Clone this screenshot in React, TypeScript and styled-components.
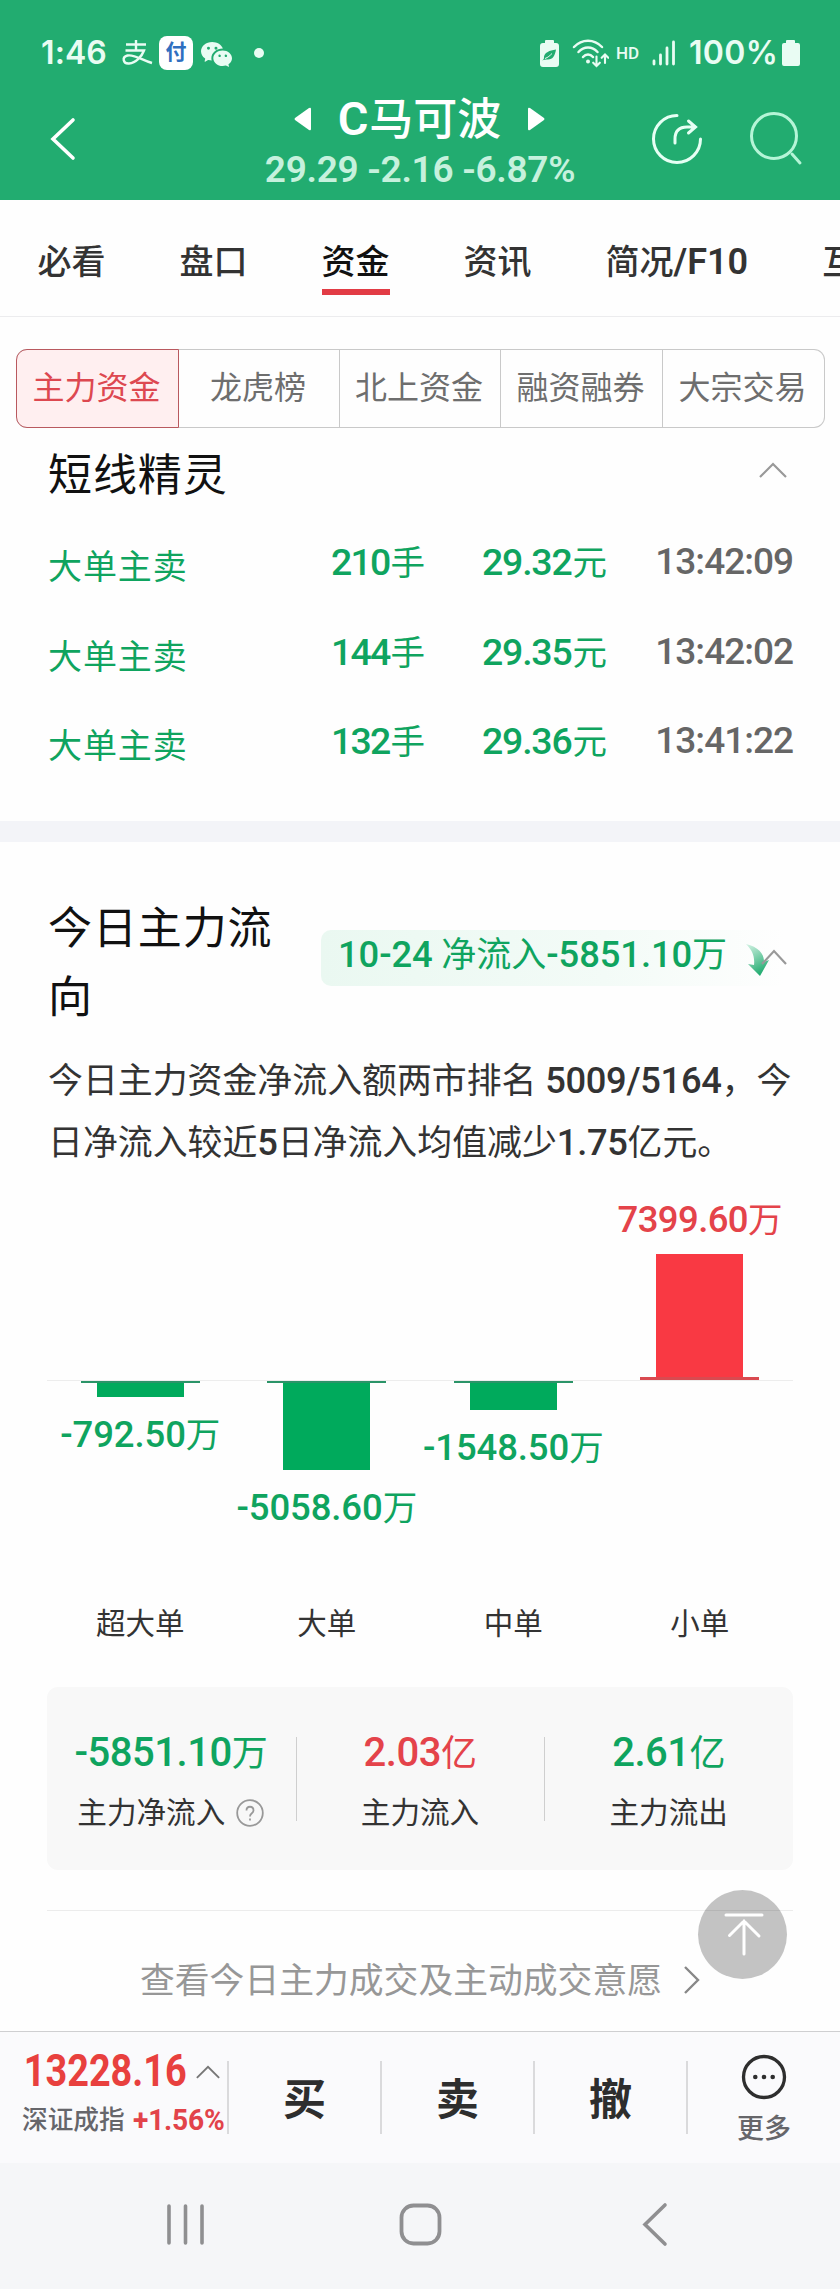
import React from 'react';
import styled, { createGlobalStyle } from 'styled-components';
import { BsWechat } from 'react-icons/bs';

const GREEN = '#0fa45f';
const RED = '#e4434a';

const GlobalStyle = createGlobalStyle`
  *, *::before, *::after { box-sizing: border-box; }
  html, body { margin: 0; padding: 0; background: #fff; }
  body {
    width: 840px;
    overflow-x: hidden;
    font-family: Roboto, "Noto Sans CJK SC", sans-serif;
    color: #333;
  }
`;

const Screen = styled.div`
  position: relative;
  width: 840px;
  height: 2289px;
  overflow: hidden;
  display: flex;
  flex-direction: column;
  background: #fefefe;
`;

/* ---------- header ---------- */
const Header = styled.header`
  height: 200px;
  flex: none;
  background: #22ac70;
  color: #fff;
`;

const StatusBar = styled.div`
  height: 90px;
  padding: 16px 40px 0 40px;
  display: flex;
  align-items: center;
  justify-content: space-between;
  color: #e9fcf3;
`;

const StatusGroup = styled.div`
  display: flex;
  align-items: center;
  height: 74px;
`;

const Clock = styled.span`
  width: 81px;
  padding-left: 1px;
  font: 600 32px/74px Inter, sans-serif;
  letter-spacing: 0.1px;
`;

const PayBadge = styled.span`
  width: 34px;
  height: 34px;
  margin: 0 8px 0 6px;
  border-radius: 8px;
  background: #fff;
  color: #2f6fc0;
  font-size: 21px;
  font-weight: 700;
  line-height: 33px;
  text-align: center;
`;

const Dot = styled.span`
  width: 10px;
  height: 10px;
  margin-left: 22px;
  border-radius: 50%;
  background: currentColor;
`;

const EcoBattery = styled.svg`
  margin-right: 13px;
`;

const HdMark = styled.span`
  width: 43px;
  font: 500 17px/74px Roboto, sans-serif;
  padding-left: 7px;
`;

const Percent = styled.span`
  width: 106px;
  padding-left: 13px;
  font: 600 32px/74px Inter, sans-serif;
  letter-spacing: 0.3px;
`;

const TitleBar = styled.div`
  height: 110px;
  padding: 0 36px 0 48px;
  display: grid;
  grid-template-columns: 160px 424px 172px;
  align-items: start;
`;

const BackIcon = styled.svg`
  margin-top: 26px;
`;

const StockBox = styled.div`
  display: flex;
  flex-direction: column;
  align-items: center;
`;

const NameRow = styled.div`
  display: flex;
  align-items: center;
  justify-content: center;
  gap: 27px;
  height: 58px;
  padding-right: 1px;
`;

const StockName = styled.h1`
  margin: 0;
  font-size: 44px;
  line-height: 56px;
  font-weight: 500;
  white-space: nowrap;
`;

const NameInitial = styled.span`
  font-size: 47px;
  font-weight: 600;
  margin-right: 1px;
`;

const Quote = styled.div`
  height: 40px;
  margin-top: 2px;
  font-size: 37px;
  line-height: 40px;
  font-weight: 600;
  letter-spacing: -0.3px;
  white-space: pre;
  color: #c6f1dd;
`;

const HeaderActions = styled.div`
  display: flex;
  justify-content: flex-end;
  gap: 47px;
  padding-top: 18px;
`;

const ActionIcon = styled.svg`
  flex: none;
`;

/* ---------- tabs ---------- */
const Tabs = styled.nav`
  height: 117px;
  flex: none;
  display: flex;
  gap: 74px;
  padding-left: 37.5px;
  border-bottom: 1px solid #ececee;
  overflow: hidden;
`;

const Tab = styled.span<{ $active?: boolean }>`
  flex: none;
  height: 95px;
  font-size: 34px;
  line-height: 124px;
  font-weight: 500;
  white-space: nowrap;
  color: ${(p) => (p.$active ? '#111' : '#333')};
  border-bottom: ${(p) => (p.$active ? '6px solid #e23c45' : '0')};
`;

const TabCode = styled.span`
  font-size: 36px;
  font-weight: 600;
`;

const Segments = styled.div`
  flex: none;
  height: 79px;
  margin: 32px 15px 0 16px;
  display: grid;
  grid-template-columns: 163px 160px 161px 162px 1fr;
  border: 1px solid #c9c9c9;
  border-left: 0;
  border-radius: 11px;
`;

const Segment = styled.span<{ $active?: boolean }>`
  text-align: center;
  font-size: 32px;
  line-height: 76px;
  color: ${(p) => (p.$active ? '#dd4850' : '#6e6e6e')};
  border-left: ${(p) => (p.$active ? '0' : '1px solid #c9c9c9')};
  padding-right: 2px;
  &:nth-child(2) { border-left: 0; }
  ${(p) =>
    p.$active &&
    `
    margin: -1px 0;
    background: #ffeff0;
    border: 1px solid #b9595f;
    border-radius: 11px 0 0 11px;
  `}
`;

/* ---------- short-term list ---------- */
const Section = styled.section`
  flex: none;
  padding: 0 47px;
`;

const SectionHead = styled.div`
  display: flex;
  justify-content: space-between;
  align-items: center;
  height: 96px;
  padding-right: 6px;
`;

const HeadChevron = styled.span`
  display: flex;
  padding-bottom: 13px;
`;

const SectionTitle = styled.h2`
  margin: 0;
  padding: 1px 0 0 1px;
  font-size: 44px;
  font-weight: 400;
  line-height: 69px;
  letter-spacing: 0.9px;
  color: #111;
`;

const TradeList = styled.div`
  height: 297px;
`;

const TradeRow = styled.div`
  display: grid;
  grid-template-columns: 200px 178px 182px 1fr;
  height: 89.5px;
  font-size: 36px;
  line-height: 76px;
  text-align: right;
  color: ${GREEN};
`;

const TradeKind = styled.span`
  padding: 5px 0 0 1px;
  font-size: 34px;
  letter-spacing: 0.9px;
  text-align: left;
`;

const TradeTime = styled.span`
  color: #666;
  font-size: 37px;
  font-weight: 500;
  letter-spacing: -1px;
`;

const Num = styled.span`
  font-size: 1.04em;
  font-weight: 500;
  letter-spacing: -0.3px;
`;

const TradeNum = styled(Num)`
  letter-spacing: -1.2px;
  margin-right: 1px;
`;

const LotNum = styled(TradeNum)`
  letter-spacing: -1.8px;
`;

const Cjk = styled.span`
  font-size: 34.5px;
  font-weight: 400;
`;

const Band = styled.div`
  flex: none;
  height: 21px;
  background: #f3f4f8;
`;

/* ---------- main-force flow ---------- */
const FlowHead = styled.div`
  position: relative;
  display: flex;
  height: 138px;
  margin-top: 52px;
`;

const FlowTitle = styled(SectionTitle)`
  width: 274px;
  padding-right: 38px;
`;

const FlowBadge = styled.div`
  height: 56px;
  margin-top: 36px;
  width: 472px;
  padding-left: 17px;
  border-radius: 10px;
  background: linear-gradient(90deg, #eaf8f1, #f3fbf7 60%, #fefefe 98%);
  color: ${GREEN};
  font-size: 35px;
  line-height: 50px;
  white-space: pre;
  display: flex;
`;

const BadgeNum = styled(Num)`
  letter-spacing: -0.1px;
`;

const BadgeArrow = styled.svg`
  margin: 14px 0 0 18px;
`;

const FlowChevron = styled.svg`
  position: absolute;
  right: 6px;
  top: 55px;
`;

const Summary = styled.p`
  height: 122px;
  margin: 18px -6px 0 1px;
  font-size: 34.9px;
  line-height: 61px;
  color: #333;
`;

const Chart = styled.div`
  display: grid;
  grid-template-columns: repeat(4, 1fr);
  margin-top: 9px;
`;

const ChartColumn = styled.div`
  display: flex;
  flex-direction: column;
`;

const UpperHalf = styled.div`
  height: 199px;
  display: flex;
  flex-direction: column;
  align-items: center;
  justify-content: flex-end;
`;

const LowerHalf = styled.div`
  height: 213px;
  border-top: 1px solid #ededed;
  display: flex;
  flex-direction: column;
  align-items: center;
`;

const Bar = styled.div<{ $up?: boolean }>`
  width: 87px;
  background: ${(p) => (p.$up ? '#f93943' : '#00aa5c')};
`;

const BarCap = styled.div<{ $up?: boolean }>`
  width: 119px;
  height: ${(p) => (p.$up ? 3 : 2)}px;
  background: ${(p) => (p.$up ? '#d94a50' : '#2b9468')};
`;

const BarLabel = styled.div<{ $up?: boolean }>`
  height: 42px;
  margin: ${(p) => (p.$up ? '0 0 13px' : '17px 0 0')};
  font-size: 36.5px;
  font-weight: 500;
  line-height: 42px;
  letter-spacing: ${(p) => (p.$up ? -0.6 : -0.1)}px;
  white-space: nowrap;
  color: ${(p) => (p.$up ? RED : GREEN)};
`;

const Category = styled.div`
  height: 60px;
  font-size: 29.5px;
  line-height: 62px;
  text-align: center;
`;

const Totals = styled.div`
  height: 183px;
  margin-top: 34px;
  border-radius: 11px;
  background: #f8f8f8;
  display: grid;
  grid-template-columns: repeat(3, 1fr);
  align-items: start;
  padding-top: 50px;
`;

const Total = styled.div`
  height: 84px;
  padding-right: 1px;
  text-align: center;
  & + & { border-left: 1px solid #cfcfcf; }
`;

const TotalValue = styled.div<{ $up?: boolean }>`
  height: 44px;
  margin-top: -6px;
  font-size: 40px;
  line-height: 44px;
  font-weight: 500;
  letter-spacing: -0.5px;
  color: ${(p) => (p.$up ? RED : GREEN)};
`;

const Unit = styled.span`
  font-size: 36px;
  font-weight: 400;
`;

const TotalLabel = styled.div`
  height: 44px;
  margin-top: 16px;
  display: flex;
  align-items: center;
  justify-content: center;
  gap: 11px;
  font-size: 29.6px;
  line-height: 44px;
`;

const DetailLink = styled.div`
  height: 121px;
  margin-top: 40px;
  padding: 4px 0 0 0;
  border-top: 1px solid #ececec;
  display: flex;
  align-items: center;
  justify-content: center;
  gap: 22px;
  font-size: 34.8px;
  line-height: 60px;
  color: #979797;
`;

const DetailText = styled.span`
  padding-top: 15px;
`;

const DetailArrow = styled.svg`
  margin-top: 14px;
`;

const ToTop = styled.div`
  position: absolute;
  left: 698px;
  top: 1890px;
  width: 89px;
  height: 89px;
  border-radius: 50%;
  background: rgba(0, 0, 0, 0.23);
`;

/* ---------- bottom ---------- */
const ActionBar = styled.div`
  flex: none;
  height: 132px;
  border-top: 1px solid #cfcfd1;
  background: #fafafc;
  display: grid;
  grid-template-columns: 227px 153px 153px 153px 154px;
  padding-top: 29px;
`;

const IndexBox = styled.div`
  margin-top: -13px;
  padding-left: 22px;
`;

const IndexRow = styled.div`
  display: flex;
  align-items: center;
  height: 48px;
`;

const IndexValue = styled.span`
  width: 174px;
  padding-left: 2px;
  font-size: 43.5px;
  font-weight: 700;
  line-height: 48px;
  color: #e8403e;
  white-space: nowrap;
  transform: scaleX(0.87);
  transform-origin: left;
`;

const IndexName = styled.span`
  width: 111px;
  font-size: 25.7px;
  font-weight: 500;
  line-height: 48px;
  color: #66666b;
`;

const IndexChange = styled.span`
  font-size: 29px;
  font-weight: 700;
  line-height: 48px;
  letter-spacing: -0.2px;
  color: #e2434a;
  transform: scaleX(0.97);
  transform-origin: left;
`;

const Action = styled.span`
  height: 73px;
  border-left: 2px solid #dadadc;
  text-align: center;
  font-size: 43px;
  line-height: 78px;
  font-weight: 600;
  color: #2e2e2e;
`;

const More = styled(Action)`
  display: flex;
  flex-direction: column;
  align-items: center;
  font-size: 27px;
  line-height: 40px;
  font-weight: 500;
  color: #66666a;
  svg { flex: none; margin-top: -7px; margin-bottom: 9px; }
`;

const SystemNav = styled.div`
  flex: 1;
  background: #f5f6f8;
  display: flex;
  justify-content: space-between;
  padding: 38px 170px 0 165px;
`;

const HomeIcon = styled.svg`
  margin-left: -6px;
`;

const Up = ({ color = '#999', w = 28 }: { color?: string; w?: number }) => (
  <svg width={w} height={(w * 16) / 28} viewBox="0 0 28 16" fill="none" stroke={color} strokeWidth="2.2">
    <path d="M1 15 14 2l13 13" />
  </svg>
);

const trades = [
  ['210', '29.32', '13:42:09'],
  ['144', '29.35', '13:42:02'],
  ['132', '29.36', '13:41:22'],
];

const flows = [
  { name: '超大单', value: '-792.50', size: 14 },
  { name: '大单', value: '-5058.60', size: 87 },
  { name: '中单', value: '-1548.50', size: 27 },
  { name: '小单', value: '7399.60', size: 123, up: true },
];

export default function App() {
  return (
    <Screen>
      <GlobalStyle />
      <Header>
        <StatusBar>
          <StatusGroup>
            <Clock>1:46</Clock>
            <svg width="32" height="28" viewBox="0 0 32 28" fill="none" stroke="currentColor" strokeWidth="2.4">
              <path d="M5 5.500h20M15 1v10M4.500 11.500h18.500C21 17 15 24 8 24.500c-6 .5-7.500-6.500-1.500-8C13 15 21 21 31 24" />
            </svg>
            <PayBadge>付</PayBadge>
            <BsWechat size={31} />
            <Dot />
          </StatusGroup>
          <StatusGroup>
            <EcoBattery width="19" height="27" viewBox="0 0 19 27">
              <path fill="currentColor" d="M5 3V1q0-1 1-1h7q1 0 1 1v2h2q3 0 3 3v18q0 3-3 3H3q-3 0-3-3V6q0-3 3-3z" />
              <path fill="#22ac70" d="M2 20.500c2-1 2-2 2-4 1-4 5-6 12-7-1 6-3 10-8 10-2 0-4 0-6 1z" />
              <path stroke="#e9fcf3" d="M5 18.500c3-1 5-3 7-5" fill="none" />
            </EcoBattery>
            <svg width="37" height="30" viewBox="0 0 37 30" fill="none" stroke="currentColor" strokeWidth="2.500" strokeLinecap="round">
              <path d="M2 9c8-8.500 20-8.500 28 0M6.500 14c5.500-6 13.500-6 19 0M11 19c3-3.500 7-3.500 10 0" />
              <circle cx="16" cy="23.500" r="2" fill="currentColor" stroke="none" />
              <path d="M24.500 18.500v9.500m-3.300-3.300 3.300 3.300 3.300-3.300M33 25v-8.500m-3.300 3.300 3.300-3.300 3.300 3.300" strokeWidth="2.100" />
            </svg>
            <HdMark>HD</HdMark>
            <svg width="24" height="26" viewBox="0 0 24 26" stroke="currentColor" strokeWidth="2.800" strokeLinecap="round">
              <path d="M2 21v3M8.500 15v9M15 8v16M21.500 2v22" />
            </svg>
            <Percent>100%</Percent>
            <svg width="18" height="27" viewBox="0 0 18 27" fill="currentColor">
              <path d="M4 3V1q0-1 1-1h7q1 0 1 1v2h3q2 0 2 2v19q0 2-2 2H2q-2 0-2-2V5q0-2 2-2z" />
            </svg>
          </StatusGroup>
        </StatusBar>
        <TitleBar>
          <BackIcon width="30" height="46" viewBox="0 0 30 46" fill="none" stroke="#fff" strokeWidth="3.600" strokeLinecap="round">
            <path d="M25 4 5 23l20 19" />
          </BackIcon>
          <StockBox>
            <NameRow>
              <svg width="17" height="24" viewBox="0 0 17 24"><path fill="#fff" d="M17 2v20q0 2-2 1L1 13q-1-1 0-2L15 1q2-1 2 1z" /></svg>
              <StockName><NameInitial>C</NameInitial>马可波</StockName>
              <svg width="17" height="24" viewBox="0 0 17 24"><path fill="#fff" d="M0 2v20q0 2 2 1l14-10q1-1 0-2L2 1Q0 0 0 2z" /></svg>
            </NameRow>
            <Quote>29.29 -2.16 -6.87%</Quote>
          </StockBox>
          <HeaderActions>
            <ActionIcon width="54" height="60" viewBox="0 0 54 60" fill="none" stroke="#e6fff4" strokeWidth="3" strokeLinecap="round">
              <path d="M28 7.500A23.500 23.500 0 1 0 51.500 31M26 35v-4q0-12 12-12h8M39.500 13l7 6-7 6" />
            </ActionIcon>
            <ActionIcon width="54" height="60" viewBox="0 0 54 60" fill="none" stroke="#b5f5d7" strokeWidth="3" strokeLinecap="round">
              <circle cx="24" cy="28" r="22.500" />
              <path d="m42 46 8 9" />
            </ActionIcon>
          </HeaderActions>
        </TitleBar>
      </Header>

      <Tabs>
        <Tab>必看</Tab>
        <Tab>盘口</Tab>
        <Tab $active>资金</Tab>
        <Tab>资讯</Tab>
        <Tab>简况<TabCode>/F10</TabCode></Tab>
        <Tab>互动</Tab>
      </Tabs>
      <Segments>
        <Segment $active>主力资金</Segment>
        <Segment>龙虎榜</Segment>
        <Segment>北上资金</Segment>
        <Segment>融资融券</Segment>
        <Segment>大宗交易</Segment>
      </Segments>

      <Section>
        <SectionHead>
          <SectionTitle>短线精灵</SectionTitle>
          <HeadChevron><Up /></HeadChevron>
        </SectionHead>
        <TradeList>
          {trades.map(([lots, price, time]) => (
            <TradeRow key={time}>
              <TradeKind>大单主卖</TradeKind>
              <span><LotNum>{lots}</LotNum><Cjk>手</Cjk></span>
              <span><TradeNum>{price}</TradeNum><Cjk>元</Cjk></span>
              <TradeTime>{time}</TradeTime>
            </TradeRow>
          ))}
        </TradeList>
      </Section>
      <Band />

      <Section>
        <FlowHead>
          <FlowTitle>今日主力流向</FlowTitle>
          <FlowBadge>
            <span><BadgeNum>10-24</BadgeNum> 净流入<BadgeNum>-5851.10</BadgeNum>万</span>
            <BadgeArrow width="26" height="33" viewBox="0 0 26 33">
              <defs>
                <linearGradient id="fall" x1="0" y1="0" x2="0.4" y2="1">
                  <stop offset="0" stopColor="#d5f3e5" />
                  <stop offset="1" stopColor="#27ae74" />
                </linearGradient>
              </defs>
              <path fill="url(#fall)" d="M1 0c12 3 18 9 18 18l5-2-9 16L3 20l6 1C10 12 7 6 1 0z" />
            </BadgeArrow>
          </FlowBadge>
          <FlowChevron width="26" height="16" viewBox="0 0 26 16" fill="none" stroke="#999" strokeWidth="2.200">
            <path d="M1 15 13 2l12 13" />
          </FlowChevron>
        </FlowHead>
        <Summary>
          今日主力资金净流入额两市排名 <Num>5009/5164</Num>，今<br />
          日净流入较近<Num>5</Num>日净流入均值减少<Num>1.75</Num>亿元。
        </Summary>

        <Chart>
          {flows.map((f) => (
            <ChartColumn key={f.name}>
              <UpperHalf>
                {f.up && (
                  <>
                    <BarLabel $up>{f.value}<Cjk>万</Cjk></BarLabel>
                    <Bar $up style={{ height: f.size }} />
                    <BarCap $up />
                  </>
                )}
              </UpperHalf>
              <LowerHalf>
                {!f.up && (
                  <>
                    <BarCap />
                    <Bar style={{ height: f.size }} />
                    <BarLabel>{f.value}<Cjk>万</Cjk></BarLabel>
                  </>
                )}
              </LowerHalf>
              <Category>{f.name}</Category>
            </ChartColumn>
          ))}
        </Chart>

        <Totals>
          <Total>
            <TotalValue>-5851.10<Unit>万</Unit></TotalValue>
            <TotalLabel>
              主力净流入
              <svg width="28" height="28" viewBox="0 0 28 28" fill="none" stroke="#999" strokeWidth="1.800">
                <circle cx="14" cy="14" r="12.800" />
                <path d="M10.500 11.500c0-5 7-5 7 0 0 3-3.500 2.500-3.500 6M14 19.500v2" />
              </svg>
            </TotalLabel>
          </Total>
          <Total>
            <TotalValue $up>2.03<Unit>亿</Unit></TotalValue>
            <TotalLabel>主力流入</TotalLabel>
          </Total>
          <Total>
            <TotalValue>2.61<Unit>亿</Unit></TotalValue>
            <TotalLabel>主力流出</TotalLabel>
          </Total>
        </Totals>

        <DetailLink>
          <DetailText>查看今日主力成交及主动成交意愿</DetailText>
          <DetailArrow width="16" height="28" viewBox="0 0 16 28" fill="none" stroke="#888" strokeWidth="2.400">
            <path d="m1 1 13 13L1 27" />
          </DetailArrow>
        </DetailLink>
      </Section>

      <ActionBar>
        <IndexBox>
          <IndexRow>
            <IndexValue>13228.16</IndexValue>
            <Up color="#777" w={24} />
          </IndexRow>
          <IndexRow>
            <IndexName>深证成指</IndexName>
            <IndexChange>+1.56%</IndexChange>
          </IndexRow>
        </IndexBox>
        <Action>买</Action>
        <Action>卖</Action>
        <Action>撤</Action>
        <More>
          <svg width="46" height="46" viewBox="0 0 46 46">
            <circle cx="23" cy="23" r="20.500" fill="none" stroke="#2e2e2e" strokeWidth="3.300" />
            <g fill="#2e2e2e"><circle cx="14.300" cy="23" r="2.300" /><circle cx="23" cy="23" r="2.300" /><circle cx="31.700" cy="23" r="2.300" /></g>
          </svg>
          更多
        </More>
      </ActionBar>
      <SystemNav>
        <svg width="42" height="48" viewBox="0 0 42 48" stroke="#8f8f91" strokeWidth="3.600" strokeLinecap="round">
          <path d="M4 5v37M20.500 5v37M37 5v37" />
        </svg>
        <HomeIcon width="46" height="48" viewBox="0 0 46 48" fill="none" stroke="#8f8f91" strokeWidth="3.800">
          <rect x="3.500" y="4.500" width="38" height="38" rx="12" />
        </HomeIcon>
        <svg width="30" height="48" viewBox="0 0 30 48" fill="none" stroke="#8f8f91" strokeWidth="3.600" strokeLinecap="round">
          <path d="M25 4 5 23.500 25 43" />
        </svg>
      </SystemNav>
      <ToTop>
        <svg width="89" height="89" viewBox="0 0 89 89" fill="none" stroke="#fff" strokeWidth="3" strokeLinecap="round">
          <path d="M28 25h36M46 64V31M31.500 45.500 46 31l15 15" />
        </svg>
      </ToTop>
    </Screen>
  );
}
